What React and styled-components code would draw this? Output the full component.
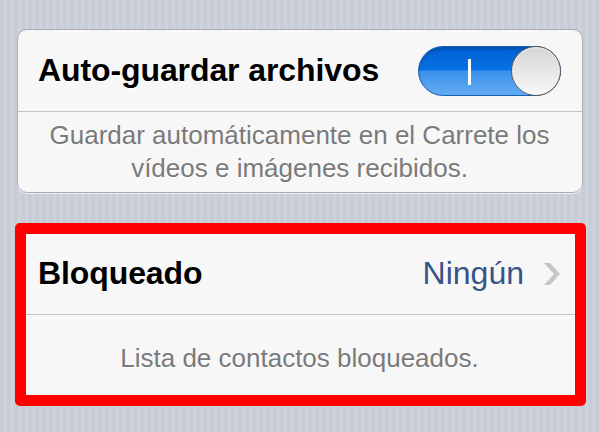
import React from "react";
import styled, { createGlobalStyle } from "styled-components";

const GlobalStyle = createGlobalStyle`
  html, body {
    margin: 0;
    padding: 0;
  }
  body {
    width: 600px;
    height: 432px;
    overflow: hidden;
    font-family: "Liberation Sans", Arial, sans-serif;
    background: repeating-linear-gradient(
      90deg,
      #c7cdd6 0px,
      #c7cdd6 4px,
      #ced3db 4px,
      #ced3db 7px
    );
  }
`;

const Page = styled.div`
  position: relative;
  padding: 29px 17px 0 17px;
  display: flex;
  flex-direction: column;
  gap: 39px;
`;

const Group = styled.div`
  background: #f7f7f7;
  border: 1px solid #a9adb3;
  border-radius: 10px;
  box-shadow: 0 1px 0 rgba(255, 255, 255, 0.7);
  overflow: hidden;
`;

const Row = styled.div`
  height: 81px;
  display: flex;
  align-items: center;
  justify-content: ${(p) => (p.center ? "center" : "space-between")};
  padding: ${(p) => (p.low ? "6px" : "0")} 21px 0 20px;
  box-sizing: border-box;
  & + & {
    border-top: 1px solid #c4c4c4;
  }
`;

const Title = styled.div`
  font-size: 32px;
  font-weight: bold;
  color: #000;
  text-shadow: 0 1px 0 #fff;
  letter-spacing: -0.1px;
`;

const Note = styled.div`
  font-size: 26px;
  line-height: 33px;
  color: #7a7a7a;
  text-align: center;
  text-shadow: 0 1px 0 #fff;
`;

const Detail = styled.div`
  display: flex;
  align-items: center;
  gap: 19px;
`;

const Value = styled.span`
  font-size: 32px;
  color: #385487;
`;

const Chevron = styled.svg`
  width: 18px;
  height: 24px;
  display: block;
`;

const Switch = styled.div`
  position: relative;
  width: 143px;
  height: 50px;
  border-radius: 25px;
  box-sizing: border-box;
  border: 1px solid #1760b8;
  background: linear-gradient(
    to bottom,
    #005fd2 0%,
    #0872e4 48%,
    #3b92ec 50%,
    #62abf2 100%
  );
  box-shadow: inset 0 2px 3px rgba(0, 0, 0, 0.2);
`;

const OnMark = styled.span`
  position: absolute;
  left: 49px;
  top: 12px;
  width: 3px;
  height: 26px;
  background: #fff;
`;

const Knob = styled.span`
  position: absolute;
  right: -1px;
  top: -1px;
  width: 50px;
  height: 50px;
  box-sizing: border-box;
  border-radius: 50%;
  border: 1px solid #5b5b5b;
  background: linear-gradient(to bottom, #d4d4d4, #f9f9f9);
  box-shadow: inset 0 1px 1px rgba(255, 255, 255, 0.8);
`;

const Highlight = styled.div`
  position: absolute;
  left: 15px;
  top: 223px;
  width: 571px;
  height: 183px;
  box-sizing: border-box;
  border: 11px solid #ff0000;
  border-radius: 5px;
  pointer-events: none;
`;

export default function App() {
  return (
    <>
      <GlobalStyle />
      <Page>
        <Group>
          <Row>
            <Title>Auto-guardar archivos</Title>
            <Switch>
              <OnMark />
              <Knob />
            </Switch>
          </Row>
          <Row center>
            <Note>
              Guardar automáticamente en el Carrete los
              <br />
              vídeos e imágenes recibidos.
            </Note>
          </Row>
        </Group>

        <Group>
          <Row>
            <Title>Bloqueado</Title>
            <Detail>
              <Value>Ningún</Value>
              <Chevron viewBox="0 0 18 24">
                <path
                  d="M1 1 L7 1 L17 12 L7 23 L1 23 L11 12 Z"
                  fill="#c6c6c6"
                />
              </Chevron>
            </Detail>
          </Row>
          <Row center low>
            <Note>Lista de contactos bloqueados.</Note>
          </Row>
        </Group>

        <Highlight />
      </Page>
    </>
  );
}
